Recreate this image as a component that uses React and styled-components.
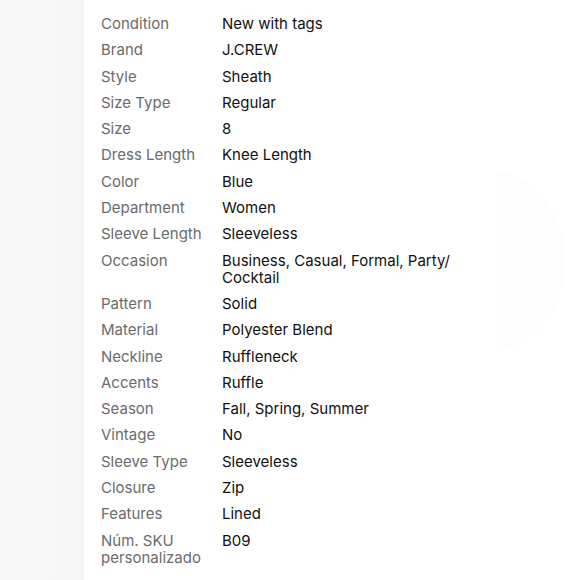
import styled, { createGlobalStyle } from "styled-components";
import { Fragment } from "react";

const Global = createGlobalStyle`
  html, body { margin: 0; padding: 0; background: #fff; }
  body { font-family: Inter, "Open Sans", Arial, sans-serif; }
`;

const Page = styled.div`
  position: relative;
  width: 580px;
  height: 580px;
  overflow: hidden;
  display: flex;
  background: #fff;
`;

const Side = styled.div`
  width: 84px;
  flex-shrink: 0;
  background: linear-gradient(90deg, #f9f9f9 0%, #f6f6f6 100%);
`;

// faint shape behind the list on the right
const Ghost = styled.div`
  position: absolute;
  left: 497px;
  top: 172px;
  width: 68px;
  height: 178px;
  background: #fdfdfd;
  border-radius: 0 100% 100% 0 / 0 50% 50% 0;
`;

const Specs = styled.dl`
  margin: 0;
  padding: 15px 0 0 17px;
  display: grid;
  grid-template-columns: 121px 232px;
  row-gap: 9.3px;
  align-content: start;
  font-size: 15px;
  line-height: 17px;
  position: relative;
`;

const Label = styled.dt`
  margin: 0;
  color: #6b6b6b;
`;

const Value = styled.dd`
  margin: 0;
  color: #111;
`;

const specs = [
  ["Condition", "New with tags"],
  ["Brand", "J.CREW"],
  ["Style", "Sheath"],
  ["Size Type", "Regular"],
  ["Size", "8"],
  ["Dress Length", "Knee Length"],
  ["Color", "Blue"],
  ["Department", "Women"],
  ["Sleeve Length", "Sleeveless"],
  ["Occasion", "Business, Casual, Formal, Party/ Cocktail"],
  ["Pattern", "Solid"],
  ["Material", "Polyester Blend"],
  ["Neckline", "Ruffleneck"],
  ["Accents", "Ruffle"],
  ["Season", "Fall, Spring, Summer"],
  ["Vintage", "No"],
  ["Sleeve Type", "Sleeveless"],
  ["Closure", "Zip"],
  ["Features", "Lined"],
  ["Núm. SKU personalizado", "B09"],
];

const App = () => {
  return (
    <Page>
      <Global />
      <Side />
      <Ghost />
      <Specs>
        {specs.map(([label, value]) => (
          <Fragment key={label}>
            <Label>{label}</Label>
            <Value>{value}</Value>
          </Fragment>
        ))}
      </Specs>
    </Page>
  );
};

export default App;
